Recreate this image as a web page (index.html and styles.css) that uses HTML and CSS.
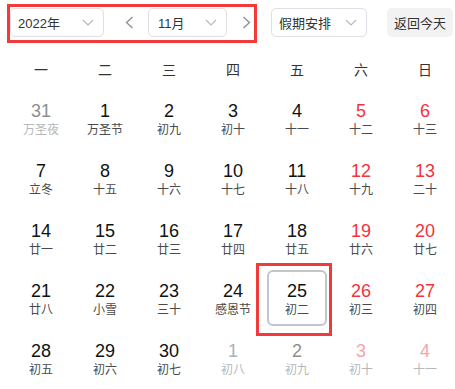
FILE: index.html
```html
<!DOCTYPE HTML>
<html lang="zh-CN">
<head>
    <meta charset="utf-8" />
    <meta name="viewport" content="width=device-width, initial-scale=1" />
    <title>万年历</title>
    <link rel="stylesheet" href="styles.css">
</head>
<body>
    <div class="toolbar">
        <div class="nav-group">
            <div class="select year-select">
                <span>2022年</span>
                <svg class="chevron" width="12" height="7" viewBox="0 0 12 7"><path d="M1 1 L6 6 L11 1" /></svg>
            </div>
            <button class="arrow-btn prev-btn">
                <svg width="9" height="13" viewBox="0 0 9 13"><path d="M7.5 1 L1.5 6.5 L7.5 12" /></svg>
            </button>
            <div class="select month-select">
                <span>11月</span>
                <svg class="chevron" width="12" height="7" viewBox="0 0 12 7"><path d="M1 1 L6 6 L11 1" /></svg>
            </div>
            <button class="arrow-btn next-btn">
                <svg width="9" height="13" viewBox="0 0 9 13"><path d="M1.5 1 L7.5 6.5 L1.5 12" /></svg>
            </button>
        </div>
        <div class="select holiday-select">
            <span>假期安排</span>
            <svg class="chevron" width="12" height="7" viewBox="0 0 12 7"><path d="M1 1 L6 6 L11 1" /></svg>
        </div>
        <button class="today-btn">返回今天</button>
    </div>

    <div class="calendar">
        <div class="weekdays">
            <div>一</div><div>二</div><div>三</div><div>四</div><div>五</div><div>六</div><div>日</div>
        </div>
        <div id="days" class="days"></div>
    </div>

    <script>
        // [date, lunar, type]  type: p = prev month, n = next month
        const days = [
            [31, "万圣夜", "p"], [1, "万圣节"], [2, "初九"], [3, "初十"], [4, "十一"], [5, "十二"], [6, "十三"],
            [7, "立冬"], [8, "十五"], [9, "十六"], [10, "十七"], [11, "十八"], [12, "十九"], [13, "二十"],
            [14, "廿一"], [15, "廿二"], [16, "廿三"], [17, "廿四"], [18, "廿五"], [19, "廿六"], [20, "廿七"],
            [21, "廿八"], [22, "小雪"], [23, "三十"], [24, "感恩节"], [25, "初二"], [26, "初三"], [27, "初四"],
            [28, "初五"], [29, "初六"], [30, "初七"], [1, "初八", "n"], [2, "初九", "n"], [3, "初十", "n"], [4, "十一", "n"]
        ];
        const selected = 25;

        const container = document.getElementById("days");
        days.forEach((d, i) => {
            const cell = document.createElement("div");
            cell.className = "cell";
            const box = document.createElement("div");
            box.className = "day";
            if (i % 7 >= 5) box.classList.add("weekend");
            if (d[2] === "p" || d[2] === "n") box.classList.add("other");
            if (i === 31) box.classList.add("faint");
            if (i === selected) {
                box.classList.add("selected");
                const mark = document.createElement("div");
                mark.className = "mark";
                cell.appendChild(mark);
            }
            box.innerHTML = `<div class="num">${d[0]}</div><div class="lunar">${d[1]}</div>`;
            cell.appendChild(box);
            container.appendChild(cell);
        });
    </script>
</body>
</html>
```

FILE: styles.css
```css
html, body {
    overflow: hidden;
}

body {
    margin: 0;
    font-family: "Liberation Sans", "Noto Sans CJK SC", sans-serif;
    color: #222;
    background: #fff;
}

.toolbar {
    display: flex;
    align-items: flex-start;
    padding: 4px 0 0 7px;
}

.nav-group {
    display: flex;
    align-items: center;
    border: 3px solid #f23a3a;
    padding: 1px 1px 3px 0;
}

.select {
    box-sizing: border-box;
    height: 29px;
    display: flex;
    align-items: center;
    justify-content: space-between;
    padding: 0 9px 0 7px;
    border: 1px solid #dcdfe6;
    border-radius: 5px;
    font-size: 13px;
    color: #333;
    background: #fff;
}

.chevron path {
    fill: none;
    stroke: #b4b8bf;
    stroke-width: 1.2;
}

.year-select {
    width: 94px;
}

.month-select {
    width: 79px;
    padding-left: 9px;
}

.holiday-select {
    width: 96px;
    margin: 4px 0 0 14px;
}

.arrow-btn {
    display: flex;
    align-items: center;
    justify-content: center;
    height: 29px;
    padding: 0;
    border: none;
    background: none;
    cursor: pointer;
}

.arrow-btn path {
    fill: none;
    stroke: #8d929b;
    stroke-width: 1.4;
}

.prev-btn {
    width: 20px;
    margin: 0 9px 0 15px;
}

.next-btn {
    width: 14px;
    margin-left: 12px;
}

.today-btn {
    box-sizing: border-box;
    height: 29px;
    margin: 4px 0 0 20px;
    padding: 0 7px;
    border: none;
    border-radius: 5px;
    background: #f2f2f3;
    font-family: inherit;
    font-size: 13px;
    color: #333;
    white-space: nowrap;
}

.calendar {
    margin: 9px 0 0 9px;
    width: 448px;
}

.weekdays {
    display: grid;
    grid-template-columns: repeat(7, 64px);
    height: 36px;
    line-height: 36px;
    text-align: center;
    font-size: 14px;
    color: #333;
}

.days {
    display: grid;
    grid-template-columns: repeat(7, 64px);
    grid-auto-rows: 60px;
}

.cell {
    position: relative;
}

.day {
    box-sizing: border-box;
    height: 56px;
    margin: 2px;
    padding-top: 9px;
    border: 2px solid transparent;
    border-radius: 6px;
    text-align: center;
}

.num {
    font-size: 18px;
    line-height: 20px;
    color: #111;
}

.lunar {
    margin-top: 1px;
    font-size: 12px;
    line-height: 16px;
    color: #4a4a4a;
}

.weekend .num {
    color: #f5313d;
}

.other .num {
    color: #8e8e8e;
}

.other .lunar {
    color: #b8b8b8;
}

.other.faint .num {
    color: #a8b4bc;
}

.other.weekend .num {
    color: #f7a3ab;
}

.selected {
    border-color: #c3c5cc;
}

.mark {
    position: absolute;
    top: -5px;
    left: -9px;
    right: -3px;
    bottom: -8px;
    border: 3px solid #f23a3a;
}
```
